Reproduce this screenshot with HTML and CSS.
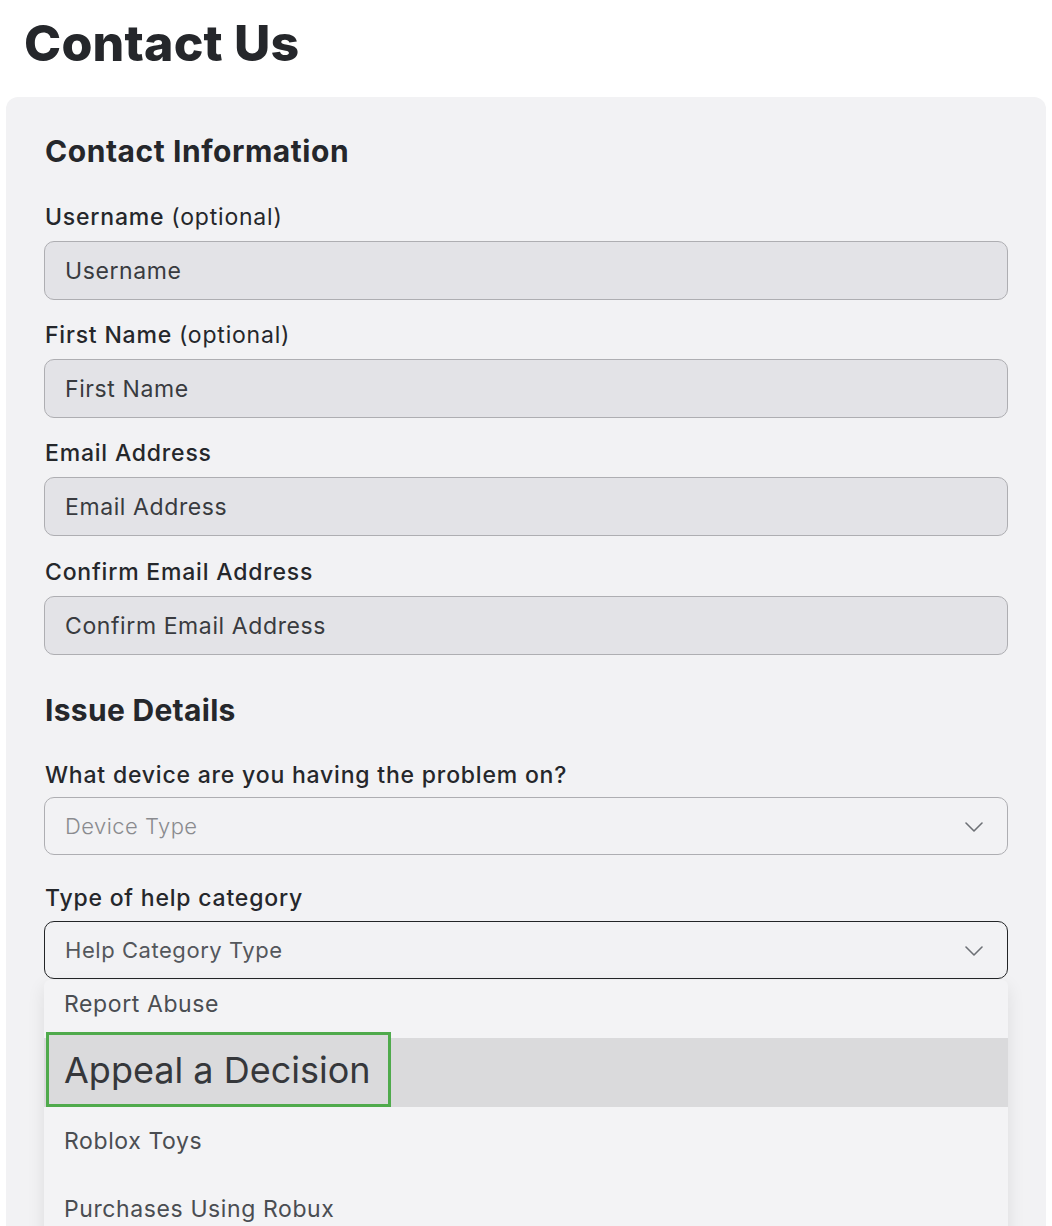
FILE: index.html
```html
<!DOCTYPE html>
<html lang="en">
<head>
<meta charset="utf-8">
<title>Contact Us</title>
<link rel="stylesheet" href="styles.css">
</head>
<body>
<h1 class="page-title">Contact Us</h1>
<div class="card">
  <h2 class="section-title">Contact Information</h2>
  <div class="field">
    <label class="label">Username <span class="opt">(optional)</span></label>
    <div class="input">Username</div>
  </div>
  <div class="field">
    <label class="label">First Name <span class="opt">(optional)</span></label>
    <div class="input">First Name</div>
  </div>
  <div class="field">
    <label class="label">Email Address</label>
    <div class="input">Email Address</div>
  </div>
  <div class="field last-contact">
    <label class="label">Confirm Email Address</label>
    <div class="input">Confirm Email Address</div>
  </div>

  <h2 class="section-title issue">Issue Details</h2>
  <div class="field sel-field">
    <label class="label">What device are you having the problem on?</label>
    <div class="select">
      <span class="sel-text light">Device Type</span>
      <svg class="chev" width="18" height="10" viewBox="0 0 18 10"><polyline points="1,1 9,9 17,1" fill="none" stroke="#6d7075" stroke-width="1.6" stroke-linecap="round" stroke-linejoin="round"/></svg>
    </div>
  </div>
  <div class="field sel-field">
    <label class="label">Type of help category</label>
    <div class="select-wrap">
      <div class="select focused">
        <span class="sel-text">Help Category Type</span>
        <svg class="chev" width="18" height="10" viewBox="0 0 18 10"><polyline points="1,1 9,9 17,1" fill="none" stroke="#6d7075" stroke-width="1.6" stroke-linecap="round" stroke-linejoin="round"/></svg>
      </div>
      <ul class="menu">
        <li class="item first">Report Abuse</li>
        <li class="item hl"><span class="callout">Appeal a Decision</span></li>
        <li class="item">Roblox Toys</li>
        <li class="item">Purchases Using Robux</li>
      </ul>
    </div>
  </div>
</div>
</body>
</html>
```

FILE: styles.css
```css
* { box-sizing: border-box; }
html, body { margin: 0; padding: 0; background: #ffffff; }
body {
  font-family: Inter, "Noto Sans", sans-serif;
  color: #25272b;
  height: 1226px;
  overflow: hidden;
}
.page-title {
  margin: 0;
  padding: 13px 0 0 24px;
  font-size: 50px;
  line-height: 60px;
  font-weight: 800;
  letter-spacing: 0.2px;
  color: #25272b;
}
.card {
  margin: 24px 6px 0 6px;
  background: #f2f2f4;
  border-radius: 12px;
  padding: 36px 38px 300px 38px;
}
.section-title {
  margin: 0;
  font-size: 30px;
  line-height: 36px;
  font-weight: 700;
  letter-spacing: 0.55px;
  color: #25272b;
  padding-left: 1px;
}
.section-title.issue { margin-top: 37px; letter-spacing: 0.3px; }
.field { display: flex; flex-direction: column; margin-top: 21px; }
.field.last-contact { margin-top: 22px; }
.section-title + .field { margin-top: 34px; }
.label {
  font-size: 23px;
  line-height: 28px;
  font-weight: 500;
  letter-spacing: 0.8px;
  color: #25272b;
  padding-left: 1px;
  margin-bottom: 10px;
}
.opt { font-weight: 400; }
.input {
  height: 59px;
  background: #e3e3e7;
  border: 1px solid #aeaeb2;
  border-radius: 10px;
  display: flex;
  align-items: center;
  padding-left: 20px;
  font-size: 23px;
  letter-spacing: 0.6px;
  color: #393b3f;
}
.issue + .sel-field { margin-top: 33px; }
.sel-field .label { margin-bottom: 8px; }
.sel-field + .sel-field { margin-top: 29px; }
.sel-field + .sel-field .label { margin-bottom: 9px; }
.select {
  height: 58px;
  border: 1px solid #aeaeb2;
  border-radius: 10px;
  display: flex;
  align-items: center;
  justify-content: space-between;
  padding: 0 24px 0 20px;
  background: #f2f2f4;
  position: relative;
  z-index: 2;
}
.select.focused { border-color: #232527; }
.sel-text { font-size: 22px; letter-spacing: 0.55px; color: #54575c; font-weight: 400; }
.sel-text.light { color: #8a8b8f; font-weight: 300; letter-spacing: 0.45px; }
.chev { display: block; margin-top: 1px; }
.select-wrap { position: relative; }
.menu {
  position: absolute;
  left: 0;
  right: 0;
  top: 59px;
  margin: 0;
  padding: 0;
  list-style: none;
  background: #f3f3f5;
  border-radius: 6px;
  box-shadow: 0 6px 18px rgba(0, 0, 0, 0.09);
  z-index: 3;
}
.item {
  height: 68px;
  display: flex;
  align-items: center;
  padding-left: 20px;
  font-size: 23px;
  letter-spacing: 0.6px;
  color: #4a4d52;
}
.item.first { height: 58px; padding-bottom: 10px; }
.item.hl {
  height: 69px;
  background: #dadadc;
  padding-left: 2px;
  align-items: flex-end;
}
.callout {
  display: flex;
  align-items: center;
  height: 75px;
  width: 345px;
  border: 3px solid #4faa4c;
  padding-left: 15px;
  font-size: 36px;
  letter-spacing: 0;
  color: #35373b;
  background: #dadadc;
  white-space: nowrap;
}
```
